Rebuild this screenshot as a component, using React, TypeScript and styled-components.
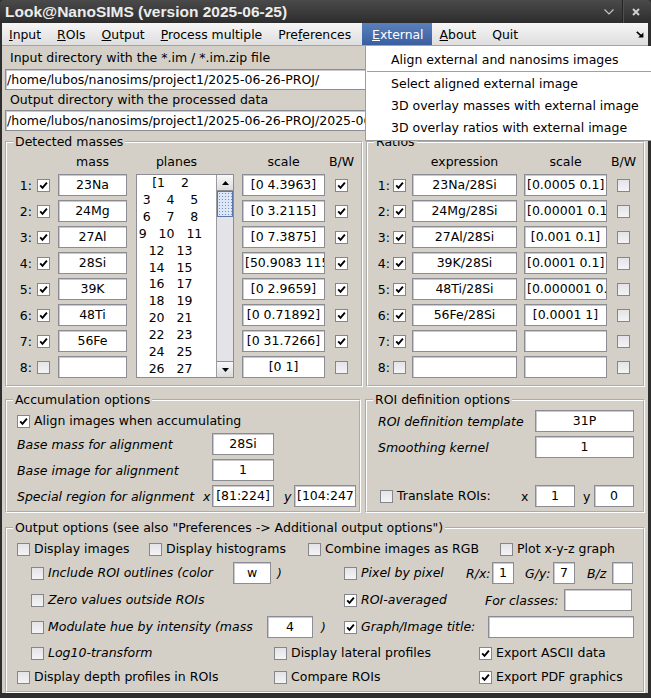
import React from 'react';
import styled, { createGlobalStyle } from 'styled-components';

const GlobalStyle = createGlobalStyle`
  html, body {
    margin: 0;
    padding: 0;
    background: #2e2e2e;
  }
  body {
    font-family: "DejaVu Sans", "Liberation Sans", sans-serif;
    font-size: 12.5px;
    color: #000;
  }
`;

const Window = styled.div`
  position: relative;
  width: 651px;
  height: 698px;
  display: flex;
  flex-direction: column;
  background: #2e2e2e;
  overflow: hidden;
`;

const TitleBar = styled.div`
  flex: none;
  height: 23px;
  display: flex;
  align-items: center;
  padding-left: 5px;
  background: linear-gradient(#4a4a4a, #2d2d2d);
  border-radius: 4px 4px 0 0;
  color: #ececec;
`;

const TitleText = styled.span`
  font: bold 15.5px "Liberation Sans", Arial, sans-serif;
  white-space: nowrap;
`;

const Controls = styled.div`
  margin-left: auto;
  height: 23px;
  display: flex;
  align-items: center;
  padding-right: 11px;
`;

const CtrlSep = styled.span`
  width: 1px;
  height: 23px;
  margin: 0 9px 0 8px;
  background: #252525;
  box-shadow: 1px 0 0 #505050;
`;

const Frame = styled.div`
  flex: 1;
  display: flex;
  flex-direction: column;
  padding: 0 3px 5px 2px;
  min-height: 0;
`;

const MenuBar = styled.div`
  flex: none;
  height: 22px;
  display: flex;
  align-items: stretch;
  background: linear-gradient(#f6f6f6, #dedede);
  border-bottom: 1px solid #a5a5a5;
  font-size: 12.4px;
`;

const MenuItem = styled.div<{ $active?: boolean }>`
  display: flex;
  align-items: center;
  padding: ${p => (p.$active ? '0 8px 0 10px' : '0 8px')};
  margin-left: ${p => (p.$active ? '3px' : '0')};
  white-space: nowrap;
  color: ${p => (p.$active ? '#fff' : '#000')};
  background: ${p => (p.$active ? 'linear-gradient(#5b80bd, #3a5e9f)' : 'transparent')};
  &:first-child {
    padding-left: 7px;
  }
`;

const CornerIcon = styled.div`
  margin-left: auto;
  margin-right: 4px;
  display: flex;
  align-items: center;
`;

const Content = styled.div`
  flex: 1;
  display: flex;
  flex-direction: column;
  padding: 0 3px;
  background: #d4d0c8;
  min-height: 0;
`;

const DirLabel = styled.div<{ $mt?: number }>`
  height: 20px;
  line-height: 20px;
  margin-top: ${p => p.$mt ?? 0}px;
  padding-left: 5px;
  white-space: nowrap;
`;

const PathField = styled.div<{ $mt?: number }>`
  box-sizing: border-box;
  height: 21px;
  margin-top: ${p => p.$mt ?? 0}px;
  line-height: 19px;
  padding-left: 1px;
  background: #fff;
  border: 1px solid #8c8c94;
  box-shadow: inset 1px 1px 0 #c8c8ce;
  white-space: nowrap;
  overflow: hidden;
`;

const PanelRow = styled.div<{ $mt: number; $gap: number }>`
  display: flex;
  gap: ${p => p.$gap}px;
  margin-top: ${p => p.$mt}px;
`;

const Panel = styled.fieldset<{ $w?: number }>`
  margin: 0;
  padding: 0;
  min-width: 0;
  box-sizing: border-box;
  border: 2px groove #ffffff;
  ${p => (p.$w ? `width: ${p.$w}px; flex: none;` : 'flex: 1;')}
`;

const Legend = styled.legend`
  margin-left: 6px;
  padding: 0 2px;
  line-height: 16px;
  white-space: nowrap;
`;

const MassGrid = styled.div`
  display: grid;
  grid-template-columns: 30px 21px 78px 106px 93px 14px;
  grid-template-rows: 18px repeat(8, 22px);
  row-gap: 4px;
  padding: 2px 0 7px;
  align-items: center;
`;

const RatioGrid = styled(MassGrid)`
  grid-template-columns: 25px 19px 112px 93px 13px;
`;

const Head = styled.div<{ $w: number }>`
  width: ${p => p.$w}px;
  white-space: nowrap;
  justify-self: start;
  display: flex;
  justify-content: center;
`;

const RowNum = styled.div<{ $pr: number }>`
  text-align: right;
  padding-right: ${p => p.$pr}px;
`;

const Field = styled.div<{ $w?: number; $h?: number }>`
  box-sizing: border-box;
  flex: none;
  width: ${p => (p.$w ? `${p.$w}px` : '100%')};
  height: ${p => p.$h ?? 22}px;
  line-height: ${p => (p.$h ?? 22) - 2}px;
  padding: 0 2px;
  background: #fff;
  border: 1px solid #8c8c94;
  box-shadow: inset 1px 1px 0 #c8c8ce;
  text-align: center;
  white-space: nowrap;
  overflow: hidden;
`;

const Box = styled.span<{ $on?: boolean }>`
  flex: none;
  box-sizing: border-box;
  width: 13px;
  height: 13px;
  display: inline-flex;
  align-items: center;
  justify-content: center;
  border: 1px solid #85858c;
  background: ${p => (p.$on ? '#fff' : 'linear-gradient(#e4e4e8, #f4f4f6)')};
`;

const CheckItem = styled.div<{ $w?: number; $italic?: boolean; $ml?: number }>`
  flex: none;
  display: flex;
  align-items: center;
  gap: 4px;
  width: ${p => (p.$w ? `${p.$w}px` : 'auto')};
  margin-left: ${p => p.$ml ?? 0}px;
  font-style: ${p => (p.$italic ? 'italic' : 'normal')};
  white-space: nowrap;
  line-height: 16px;
`;

const ListBox = styled.div`
  grid-column: 4;
  grid-row: 2 / span 8;
  align-self: stretch;
  width: 98px;
  box-sizing: border-box;
  display: flex;
  background: #fff;
  border: 1px solid #8c8c94;
  overflow: hidden;
`;

const ListText = styled.div`
  flex: 1;
  padding-right: 12px;
  text-align: center;
  white-space: pre;
  line-height: 16.9px;
  overflow: hidden;
`;

const ScrollBar = styled.div`
  width: 16px;
  flex: none;
  display: flex;
  flex-direction: column;
  background: #e3e3e8;
  border-left: 1px solid #9a9aa2;
`;

const ScrollBtn = styled.div`
  height: 16px;
  flex: none;
  box-sizing: border-box;
  display: flex;
  align-items: center;
  justify-content: center;
  background: linear-gradient(#f8f8f8, #dcdcdc);
  border-bottom: 1px solid #8e8e96;
  &:last-child {
    border-bottom: none;
    border-top: 1px solid #8e8e96;
    margin-top: auto;
  }
`;

const Thumb = styled.div`
  height: 26px;
  flex: none;
  box-sizing: border-box;
  border: 1px solid #5a78ac;
  background-color: #dde7f5;
  background-image: radial-gradient(#6f8fc4 0.7px, transparent 0.9px);
  background-size: 3px 3px;
`;

const AccGrid = styled.div`
  display: grid;
  grid-template-columns: 186px 9px 62px 20px 62px;
  grid-template-rows: 21px 22px 22px 22px;
  row-gap: 4px;
  padding: 0 0 4px 10px;
  align-items: center;
`;

const RoiGrid = styled.div`
  display: grid;
  grid-template-columns: 143px 14px 40px 19px 40px;
  grid-template-rows: 22px 22px 19px 22px;
  row-gap: 4px;
  padding: 2px 0 4px 11px;
  align-items: center;
`;

const Cell = styled.div<{ $col?: string; $italic?: boolean; $pl?: number; $end?: boolean }>`
  grid-column: ${p => p.$col ?? 'auto'};
  font-style: ${p => (p.$italic ? 'italic' : 'normal')};
  padding-left: ${p => p.$pl ?? 0}px;
  align-self: ${p => (p.$end ? 'end' : 'center')};
  white-space: nowrap;
`;

const OutBody = styled.div`
  display: flex;
  flex-direction: column;
  padding: 0 0 3px 10px;
`;

const ORow = styled.div<{ $mt: number; $indent?: number }>`
  height: 22px;
  margin-top: ${p => p.$mt}px;
  padding-left: ${p => p.$indent ?? 0}px;
  display: flex;
  align-items: center;
`;

const Slot = styled.span<{ $w: number; $italic?: boolean; $pl?: number }>`
  flex: none;
  box-sizing: border-box;
  width: ${p => p.$w}px;
  padding-left: ${p => p.$pl ?? 0}px;
  font-style: ${p => (p.$italic ? 'italic' : 'normal')};
  white-space: nowrap;
`;

const Dropdown = styled.div`
  position: absolute;
  top: 46px;
  left: 365px;
  right: 0;
  z-index: 5;
  padding: 3px 0 1px;
  background: #fff;
  border-left: 1px solid #9c9c9c;
  border-bottom: 1px solid #9c9c9c;
`;

const DropItem = styled.div`
  height: 22px;
  line-height: 22px;
  padding-left: 25px;
  white-space: nowrap;
`;

const DropSep = styled.div`
  height: 2px;
  margin-left: 1px;
  border-top: 1px solid #a0a0a0;
  box-sizing: border-box;
`;

const Tick = () => (
  <svg width="9" height="9" viewBox="0 0 9 9">
    <path d="M1.2 4.4 L3.5 6.8 L7.9 1.6" fill="none" stroke="#000" strokeWidth="1.9" />
  </svg>
);

const Check = ({ on }: { on?: boolean }) => <Box $on={on}>{on && <Tick />}</Box>;

type CBProps = {
  on?: boolean;
  label: string;
  w?: number;
  italic?: boolean;
  ml?: number;
};

const CB = ({ on, label, w, italic, ml }: CBProps) => (
  <CheckItem $w={w} $italic={italic} $ml={ml}>
    <Check on={on} />
    <span>{label}</span>
  </CheckItem>
);

const masses = [
  { m: '23Na', s: '[0 4.3963]', on: true, bw: true },
  { m: '24Mg', s: '[0 3.2115]', on: true, bw: true },
  { m: '27Al', s: '[0 7.3875]', on: true, bw: true },
  { m: '28Si', s: '[50.9083 115.346]', on: true, bw: true },
  { m: '39K', s: '[0 2.9659]', on: true, bw: true },
  { m: '48Ti', s: '[0 0.71892]', on: true, bw: true },
  { m: '56Fe', s: '[0 31.7266]', on: true, bw: true },
  { m: '', s: '[0 1]', on: false, bw: false },
];

const ratios = [
  { e: '23Na/28Si', s: '[0.0005 0.1]', on: true },
  { e: '24Mg/28Si', s: '[0.00001 0.1]', on: true },
  { e: '27Al/28Si', s: '[0.001 0.1]', on: true },
  { e: '39K/28Si', s: '[0.0001 0.1]', on: true },
  { e: '48Ti/28Si', s: '[0.000001 0.1]', on: true },
  { e: '56Fe/28Si', s: '[0.0001 1]', on: true },
  { e: '', s: '', on: true },
  { e: '', s: '', on: false },
];

const planeLines = [
  '[1    2',
  '3    4    5',
  '6    7    8',
  '9   10   11',
  '12   13',
  '14   15',
  '16   17',
  '18   19',
  '20   21',
  '22   23',
  '24   25',
  '26   27',
];

const Chevron = () => (
  <svg width="10" height="6" viewBox="0 0 10 6">
    <path d="M0.5 0.5 L5 5 L9.5 0.5" fill="none" stroke="#c4c4c4" strokeWidth="1.2" />
  </svg>
);

const CloseX = () => (
  <svg width="8" height="8" viewBox="0 0 8 8">
    <path d="M1 1 L7 7 M7 1 L1 7" stroke="#cfcfcf" strokeWidth="2" />
  </svg>
);

const Arrow = ({ up }: { up?: boolean }) => (
  <svg width="7" height="4" viewBox="0 0 7 4">
    <path d={up ? 'M0 4 L3.5 0 L7 4 Z' : 'M0 0 L3.5 4 L7 0 Z'} fill="#000" />
  </svg>
);

export default function App() {
  return (
    <>
      <GlobalStyle />
      <Window>
        <TitleBar>
          <TitleText>Look@NanoSIMS (version 2025-06-25)</TitleText>
          <Controls>
            <Chevron />
            <CtrlSep />
            <CloseX />
          </Controls>
        </TitleBar>
        <Frame>
          <MenuBar>
            <MenuItem><span><u>I</u>nput</span></MenuItem>
            <MenuItem><span><u>R</u>OIs</span></MenuItem>
            <MenuItem><span><u>O</u>utput</span></MenuItem>
            <MenuItem><span><u>P</u>rocess multiple</span></MenuItem>
            <MenuItem><span>Pre<u>f</u>erences</span></MenuItem>
            <MenuItem $active><span><u>E</u>xternal</span></MenuItem>
            <MenuItem><span><u>A</u>bout</span></MenuItem>
            <MenuItem><span>Quit</span></MenuItem>
            <CornerIcon>
              <svg width="8" height="7" viewBox="0 0 8 7">
                <path d="M0.8 0.8 L5.2 4.8" stroke="#000" strokeWidth="1.6" />
                <path d="M2.2 6.6 L7.4 6.6 L7.4 1.6 Z" fill="#000" />
              </svg>
            </CornerIcon>
          </MenuBar>
          <Content>
            <DirLabel $mt={2}>Input directory with the *.im / *.im.zip file</DirLabel>
            <PathField $mt={1}>/home/lubos/nanosims/project1/2025-06-26-PROJ/</PathField>
            <DirLabel>Output directory with the processed data</DirLabel>
            <PathField>/home/lubos/nanosims/project1/2025-06-26-PROJ/2025-06-26-PROJ/</PathField>

            <PanelRow $mt={3} $gap={3}>
              <Panel $w={358}>
                <Legend>Detected masses</Legend>
                <MassGrid>
                  <ListBox>
                    <ListText>{planeLines.join('\n')}</ListText>
                    <ScrollBar>
                      <ScrollBtn><Arrow up /></ScrollBtn>
                      <Thumb />
                      <ScrollBtn><Arrow /></ScrollBtn>
                    </ScrollBar>
                  </ListBox>
                  <span />
                  <span />
                  <Head $w={69}>mass</Head>
                  <Head $w={81}>planes</Head>
                  <Head $w={83}>scale</Head>
                  <Head $w={13}>B/W</Head>
                  {masses.map((r, i) => (
                    <React.Fragment key={i}>
                      <RowNum $pr={5}>{i + 1}:</RowNum>
                      <Check on={r.on} />
                      <Field $w={69}>{r.m}</Field>
                      <Field $w={83}>{r.s}</Field>
                      <Check on={r.bw} />
                    </React.Fragment>
                  ))}
                </MassGrid>
              </Panel>
              <Panel>
                <Legend>Ratios</Legend>
                <RatioGrid>
                  <span />
                  <span />
                  <Head $w={105}>expression</Head>
                  <Head $w={83}>scale</Head>
                  <Head $w={13}>B/W</Head>
                  {ratios.map((r, i) => (
                    <React.Fragment key={i}>
                      <RowNum $pr={3}>{i + 1}:</RowNum>
                      <Check on={r.on} />
                      <Field $w={105}>{r.e}</Field>
                      <Field $w={83}>{r.s}</Field>
                      <Check />
                    </React.Fragment>
                  ))}
                </RatioGrid>
              </Panel>
            </PanelRow>

            <PanelRow $mt={5} $gap={4}>
              <Panel $w={356}>
                <Legend>Accumulation options</Legend>
                <AccGrid>
                  <Cell $col="1 / span 5" $end>
                    <CB on label="Align images when accumulating" />
                  </Cell>
                  <Cell $col="1 / span 2" $italic>Base mass for alignment</Cell>
                  <Field $w={62}>28Si</Field>
                  <Cell $col="4 / span 2" />
                  <Cell $col="1 / span 2" $italic>Base image for alignment</Cell>
                  <Field $w={62}>1</Field>
                  <Cell $col="4 / span 2" />
                  <Cell $italic>Special region for alignment</Cell>
                  <Cell $italic>x</Cell>
                  <Field $w={62}>[81:224]</Field>
                  <Cell $italic $pl={10}>y</Cell>
                  <Field $w={62}>[104:247]</Field>
                </AccGrid>
              </Panel>
              <Panel>
                <Legend>ROI definition options</Legend>
                <RoiGrid>
                  <Cell $col="1 / span 2" $italic>ROI definition template</Cell>
                  <Cell $col="3 / span 3"><Field $w={99}>31P</Field></Cell>
                  <Cell $col="1 / span 2" $italic>Smoothing kernel</Cell>
                  <Cell $col="3 / span 3"><Field $w={99}>1</Field></Cell>
                  <Cell $col="1 / span 5" />
                  <Cell><CB ml={2} label="Translate ROIs:" /></Cell>
                  <Cell>x</Cell>
                  <Field $w={40}>1</Field>
                  <Cell $pl={8}>y</Cell>
                  <Field $w={40}>0</Field>
                </RoiGrid>
              </Panel>
            </PanelRow>

            <PanelRow $mt={7} $gap={0}>
              <Panel>
                <Legend>Output options (see also "Preferences -&gt; Additional output options")</Legend>
                <OutBody>
                  <ORow $mt={2}>
                    <CB w={132} label="Display images" />
                    <CB w={159} label="Display histograms" />
                    <CB w={192} label="Combine images as RGB" />
                    <CB label="Plot x-y-z graph" />
                  </ORow>
                  <ORow $mt={2} $indent={14}>
                    <CB w={202} italic label="Include ROI outlines (color" />
                    <Field $w={38}>w</Field>
                    <Slot $w={73} $pl={6} $italic>)</Slot>
                    <CB w={122} italic label="Pixel by pixel" />
                    <Slot $w={26} $italic>R/x:</Slot>
                    <Field $w={22}>1</Field>
                    <Slot $w={39} $pl={11} $italic>G/y:</Slot>
                    <Field $w={22}>7</Field>
                    <Slot $w={37} $pl={12} $italic>B/z</Slot>
                    <Field $w={21} />
                  </ORow>
                  <ORow $mt={5} $indent={14}>
                    <CB w={313} italic label="Zero values outside ROIs" />
                    <CB w={141} italic on label="ROI-averaged" />
                    <Slot $w={79} $italic>For classes:</Slot>
                    <Field $w={68} />
                  </ORow>
                  <ORow $mt={5} $indent={14}>
                    <CB w={236} italic label="Modulate hue by intensity (mass" />
                    <Field $w={46}>4</Field>
                    <Slot $w={31} $pl={8} $italic>)</Slot>
                    <CB w={144} italic on label="Graph/Image title:" />
                    <Field $w={146} />
                  </ORow>
                  <ORow $mt={4} $indent={14}>
                    <CB w={243} italic label="Log10-transform" />
                    <CB w={205} label="Display lateral profiles" />
                    <CB on label="Export ASCII data" />
                  </ORow>
                  <ORow $mt={2}>
                    <CB w={257} label="Display depth profiles in ROIs" />
                    <CB w={205} label="Compare ROIs" />
                    <CB on label="Export PDF graphics" />
                  </ORow>
                </OutBody>
              </Panel>
            </PanelRow>
          </Content>
        </Frame>
        <Dropdown>
          <DropItem>Align external and nanosims images</DropItem>
          <DropSep />
          <DropItem>Select aligned external image</DropItem>
          <DropItem>3D overlay masses with external image</DropItem>
          <DropItem>3D overlay ratios with external image</DropItem>
        </Dropdown>
      </Window>
    </>
  );
}
